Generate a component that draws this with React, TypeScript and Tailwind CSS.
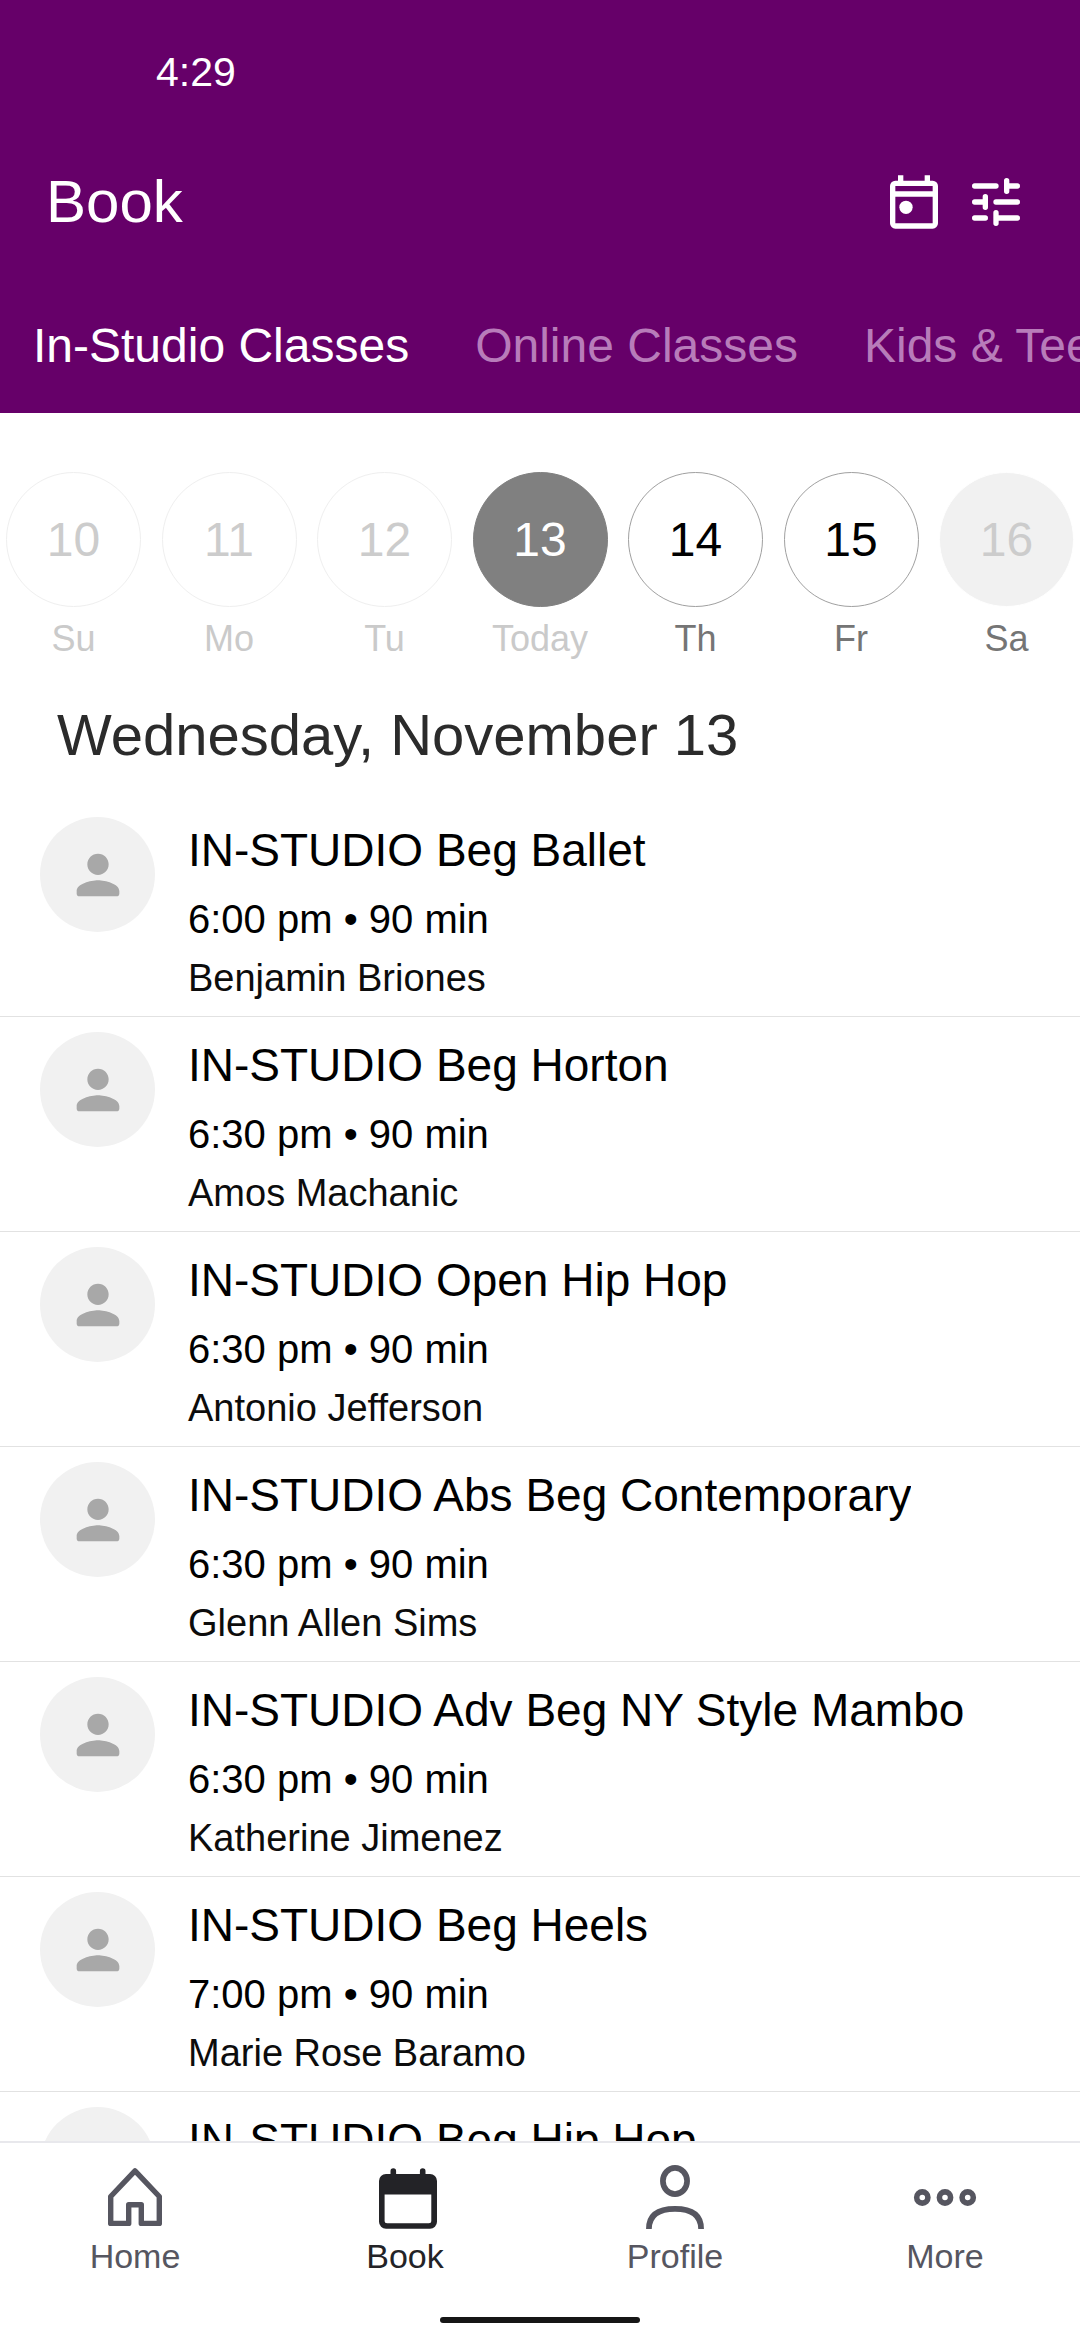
import { clsx } from "clsx";

interface Day {
  date: number;
  label: string;
  circle: string;
  text: string;
}

interface ClassItem {
  id: number;
  title: string;
  time: string;
  duration: number;
  teacher: string;
}

const tabs = ["In-Studio Classes", "Online Classes", "Kids & Teens"];

const past = "border-[#efefef] text-[#cccccc]";
const open = "border-[#a0a0a0] text-black";

const days: Day[] = [
  { date: 10, label: "Su", circle: past, text: "text-[#cacaca]" },
  { date: 11, label: "Mo", circle: past, text: "text-[#cacaca]" },
  { date: 12, label: "Tu", circle: past, text: "text-[#cacaca]" },
  {
    date: 13,
    label: "Today",
    circle: "border-[#808080] bg-[#808080] text-white",
    text: "text-[#cacaca]",
  },
  { date: 14, label: "Th", circle: open, text: "text-[#757575]" },
  { date: 15, label: "Fr", circle: open, text: "text-[#757575]" },
  {
    date: 16,
    label: "Sa",
    circle: "border-white bg-[#f1f1f1] text-[#cccccc]",
    text: "text-[#757575]",
  },
];

const classes: ClassItem[] = [
  { id: 1, title: "IN-STUDIO Beg Ballet", time: "6:00 pm", duration: 90, teacher: "Benjamin Briones" },
  { id: 2, title: "IN-STUDIO Beg Horton", time: "6:30 pm", duration: 90, teacher: "Amos Machanic" },
  { id: 3, title: "IN-STUDIO Open Hip Hop", time: "6:30 pm", duration: 90, teacher: "Antonio Jefferson" },
  { id: 4, title: "IN-STUDIO Abs Beg Contemporary", time: "6:30 pm", duration: 90, teacher: "Glenn Allen Sims" },
  { id: 5, title: "IN-STUDIO Adv Beg NY Style Mambo", time: "6:30 pm", duration: 90, teacher: "Katherine Jimenez" },
  { id: 6, title: "IN-STUDIO Beg Heels", time: "7:00 pm", duration: 90, teacher: "Marie Rose Baramo" },
  { id: 7, title: "IN-STUDIO Beg Hip Hop", time: "", duration: 0, teacher: "" },
];

const CalendarIcon = () => (
  <svg viewBox="0 0 24 24" className="size-16" fill="currentColor" aria-hidden="true">
    <path
      fillRule="evenodd"
      d="M6 2h2v2h8V2h2v2h1a2 2 0 0 1 2 2v14a2 2 0 0 1-2 2H5a2 2 0 0 1-2-2V6a2 2 0 0 1 2-2h1zM5 6v2h14V6zm0 4v10h14V10z"
    />
    <circle cx="9" cy="14" r="2.5" />
  </svg>
);

const TuneIcon = () => (
  <svg
    viewBox="0 0 24 24"
    className="size-16"
    fill="none"
    stroke="currentColor"
    strokeWidth="2"
    strokeLinecap="round"
    aria-hidden="true"
  >
    <path d="M4 6h8M16 4v4M16 6h4M4 12h4M8 10v4M12 12h8M4 18h4M12 16v4M12 18h8" />
  </svg>
);

const PersonIcon = () => (
  <svg viewBox="0 0 24 24" className="size-16" fill="currentColor" aria-hidden="true">
    <path d="M12 12c2.21 0 4-1.79 4-4s-1.79-4-4-4-4 1.79-4 4 1.79 4 4 4zm0 2c-2.67 0-8 1.34-8 4v1c0 .55.45 1 1 1h14c.55 0 1-.45 1-1v-1c0-2.66-5.33-4-8-4z" />
  </svg>
);

const HomeIcon = () => (
  <svg viewBox="0 0 66 66" className="size-[66px]" fill="none" stroke="currentColor" strokeWidth="5.4" strokeLinejoin="round">
    <path d="M8.7 59.4V32.5L33 6.9l24.3 25.6v26.9h-18V40.7H26.7v18.7z" />
  </svg>
);

const BookIcon = () => (
  <svg viewBox="0 0 66 66" className="size-[66px]" fill="currentColor">
    <path
      fillRule="evenodd"
      d="M14 10h44a7 7 0 0 1 7 7v40.7a7 7 0 0 1-7 7H14a7 7 0 0 1-7-7V17a7 7 0 0 1 7-7zM12.6 30.5v26.3a2.5 2.5 0 0 0 2.5 2.5h41.7a2.5 2.5 0 0 0 2.5-2.5V30.5z"
    />
    <path d="M21.3 7v6M50.7 7v6" stroke="currentColor" strokeWidth="5.6" strokeLinecap="round" />
  </svg>
);

const ProfileIcon = () => (
  <svg viewBox="0 0 66 66" className="size-[66px]" fill="none" stroke="currentColor" strokeWidth="5.7">
    <ellipse cx="33" cy="17" rx="12.1" ry="13.1" />
    <path d="M6.9 65C6.9 51.5 16 44.9 33 44.9S59.1 51.5 59.1 65" />
  </svg>
);

const MoreIcon = () => (
  <svg viewBox="0 0 66 66" className="size-[66px]" fill="none" stroke="currentColor" strokeWidth="5.6">
    <circle cx="10.3" cy="33.5" r="5.6" />
    <circle cx="33" cy="33.5" r="5.6" />
    <circle cx="55.7" cy="33.5" r="5.6" />
  </svg>
);

const navItems = [
  { label: "Home", icon: HomeIcon },
  { label: "Book", icon: BookIcon },
  { label: "Profile", icon: ProfileIcon },
  { label: "More", icon: MoreIcon },
];

const ClassRow = ({ title, time, duration, teacher }: ClassItem) => {
  return (
    <li className="flex gap-[33px] border-b border-[#e2e2e2] px-10 py-[14px]">
      <div className="mt-px flex size-[115px] shrink-0 items-center justify-center rounded-full bg-[#f1f1f1] text-[#a8a8a8]">
        <PersonIcon />
      </div>
      <div className="flex min-w-0 flex-col gap-[11px]">
        <h3 className="truncate text-[46px] leading-[68px]">{title}</h3>
        {time && (
          <p className="text-[40px] leading-[48px]">
            {time} • {duration} min
          </p>
        )}
        {teacher && <p className="text-[38px] leading-[48px] text-[#0c0c0c]">{teacher}</p>}
      </div>
    </li>
  );
};

export default function App() {
  return (
    <div className="flex h-screen flex-col overflow-hidden bg-white font-['Liberation_Sans',Arial,sans-serif] text-black">
      <header className="shrink-0 bg-[#660069] pt-12 text-white">
        <div className="pl-[156px] text-[41px] leading-[48px]">4:29</div>
        <div className="mt-[70px] flex items-center justify-between pr-[52px] pl-[46px]">
          <h1 className="text-[60px] leading-[72px]">Book</h1>
          <div className="flex gap-[18px]">
            <button type="button" aria-label="Calendar">
              <CalendarIcon />
            </button>
            <button type="button" aria-label="Filters">
              <TuneIcon />
            </button>
          </div>
        </div>
        <nav className="mt-[41px] flex overflow-hidden">
          {tabs.map((tab, i) => (
            <button
              key={tab}
              type="button"
              className={clsx(
                "shrink-0 px-[33px] py-[37px] text-[48px] leading-[60px] whitespace-nowrap",
                i === 0 ? "text-white" : "text-[#b87cba]"
              )}
            >
              {tab}
            </button>
          ))}
        </nav>
      </header>

      <section className="flex shrink-0 justify-between px-[6px] pt-[59px]">
        {days.map((day) => (
          <button key={day.date} type="button" className="flex w-[135px] flex-col items-center gap-2">
            <span
              className={clsx(
                "flex size-[135px] items-center justify-center rounded-full border text-[48px] leading-[60px]",
                day.circle
              )}
            >
              {day.date}
            </span>
            <span className={clsx("text-[36px] leading-[48px]", day.text)}>{day.label}</span>
          </button>
        ))}
      </section>

      <main className="flex min-h-0 flex-1 flex-col">
        <h2 className="px-[57px] pt-9 pb-[31px] text-[58px] leading-[72px] text-[#2b2b2b]">
          Wednesday, November 13
        </h2>
        <ul className="min-h-0 flex-1 overflow-y-auto [scrollbar-width:none]">
          {classes.map((item) => (
            <ClassRow key={item.id} {...item} />
          ))}
        </ul>
      </main>

      <footer className="shrink-0 border-t-2 border-[#e8e8ec] bg-white pt-[21px] pb-[17px]">
        <nav className="grid grid-cols-4">
          {navItems.map(({ label, icon: Icon }) => (
            <a
              key={label}
              href={`#${label.toLowerCase()}`}
              className={clsx(
                "flex flex-col items-center gap-1",
                label === "Book" ? "text-[#232327]" : "text-[#565660]"
              )}
            >
              <Icon />
              <span className="text-[34px] leading-[44px]">{label}</span>
            </a>
          ))}
        </nav>
        <div className="mx-auto mt-[39px] h-[6px] w-[200px] rounded-full bg-[#161616]" />
      </footer>
    </div>
  );
}
